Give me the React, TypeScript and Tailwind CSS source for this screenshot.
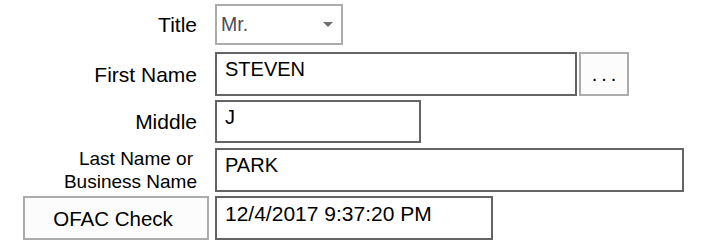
const font = { fontFamily: '"Liberation Sans", Arial, sans-serif' };

function Field({ value, className }: { value: string; className: string }) {
  return (
    <div
      className={`border-2 border-[#646464] bg-white pl-2 pt-1 leading-[23px] text-black ${className}`}
    >
      {value}
    </div>
  );
}

export default function App() {
  return (
    <div className="w-[708px] h-[243px] bg-white pt-1 text-black" style={font}>
      {/* Title */}
      <div className="flex items-center h-[41px]">
        <div className="w-[197px] text-right text-[21px] leading-[23px]">Title</div>
        <div className="ml-[18px] w-[128px] h-[41px] border-2 border-[#acacac] bg-white flex items-center justify-between pl-[4px] pr-[8px]">
          <span className="text-[19.5px] leading-[23px] text-[#4a4a5a]">Mr.</span>
          <svg width="10" height="5" viewBox="0 0 10 5">
            <path d="M0 0 H10 L5 5 Z" fill="#6e6e6e" />
          </svg>
        </div>
      </div>

      {/* First Name */}
      <div className="flex items-center mt-[7px] h-[44px]">
        <div className="w-[197px] text-right text-[21px] leading-[23px]">First Name</div>
        <Field value="STEVEN" className="ml-[18px] w-[362px] h-[44px] text-[20px]" />
        <button className="ml-[2px] w-[50px] h-[44px] border-2 border-[#acacac] bg-[#fcfcfc] text-[20px] leading-[23px] tracking-[4px] pl-[4px] flex items-center justify-center">
          ...
        </button>
      </div>

      {/* Middle */}
      <div className="flex items-center mt-[4px] h-[43px]">
        <div className="w-[197px] text-right text-[21px] leading-[23px]">Middle</div>
        <Field value="J" className="ml-[18px] w-[206px] h-[43px] text-[20px]" />
      </div>

      {/* Last Name */}
      <div className="flex items-center mt-[5px] h-[44px]">
        <div className="w-[197px] text-right text-[19px] leading-[23px]">
          <div className="pr-[4px]">Last Name or</div>
          <div>Business Name</div>
        </div>
        <Field value="PARK" className="ml-[18px] w-[469px] h-[44px] text-[20px]" />
      </div>

      {/* OFAC */}
      <div className="flex items-center mt-[4px] h-[44px]">
        <button className="ml-[23px] w-[186px] h-[44px] border-2 border-[#acacac] bg-[#fcfcfc] text-[20.5px] leading-[23px] flex items-center justify-center pr-[6px]">
          OFAC Check
        </button>
        <Field value="12/4/2017 9:37:20 PM" className="ml-[6px] w-[278px] h-[44px] text-[21px]" />
      </div>
    </div>
  );
}
